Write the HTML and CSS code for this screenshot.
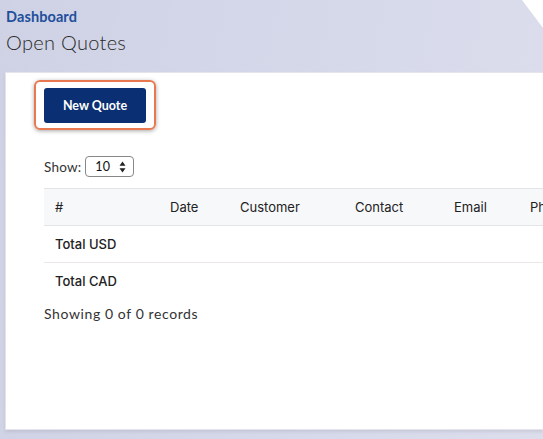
FILE: index.html
```html
<!DOCTYPE html>
<html>
<head>
<meta charset="utf-8">
<link rel="stylesheet" href="styles.css">
</head>
<body>
<div class="page">
  <div class="corner"></div>
  <header class="head">
    <a class="crumb">Dashboard</a>
    <h1 class="title">Open Quotes</h1>
  </header>
  <section class="card">
    <div class="btn-wrap"><button class="btn">New Quote</button></div>
    <div class="show">
      <span>Show:</span>
      <div class="select"><span>10</span>
        <svg width="7" height="12" viewBox="0 0 7 12"><path d="M3.5 0.5L6.5 4.8H0.5Z M3.5 11.5L6.5 7.2H0.5Z" fill="#222"/></svg>
      </div>
    </div>
    <div class="table">
      <div class="row thead">
        <div class="c c1">#</div>
        <div class="c c2">Date</div>
        <div class="c c3">Customer</div>
        <div class="c c4">Contact</div>
        <div class="c c5">Email</div>
        <div class="c c6">Phone</div>
      </div>
      <div class="row total"><div class="c c1">Total USD</div></div>
      <div class="row total last"><div class="c c1">Total CAD</div></div>
    </div>
    <p class="info">Showing 0 of 0 records</p>
  </section>
</div>
</body>
</html>
```
FILE: styles.css
```css
html, body { margin: 0; padding: 0; }
body {
  width: 543px; height: 439px; overflow: hidden;
  background: linear-gradient(100deg, #cfd2e4 0%, #d6d9ea 60%, #dcdeec 100%);
  font-family: "Lato", "Inter", sans-serif;
  color: #222;
}
.page { position: relative; height: 439px; display: flex; flex-direction: column; }
.corner {
  position: absolute; right: 0; top: 0; width: 21px; height: 28px;
  background: #fff;
  clip-path: polygon(0 0, 100% 0, 100% 100%);
}
.head { padding: 9px 0 0 6px; height: 63px; box-sizing: border-box; }
.crumb { display: block; color: #1f4f9c; font-weight: 700; font-size: 14.5px; line-height: 16px; letter-spacing: 0.1px; }
.title { margin: 5px 0 0; font-weight: 300; font-size: 20px; line-height: 24px; color: #2a2a2a; letter-spacing: 0.3px; }
.card {
  margin: 9px 0 0 5px; flex: none; height: 358px;
  background: #fff;
  border: 1px solid #e4e5ec; border-right: none;
  box-shadow: 0 2px 3px rgba(120,120,140,0.18);
  padding: 7px 0 0 38px; box-sizing: border-box;
}
.btn-wrap {
  width: 122px; height: 50px; box-sizing: border-box;
  border: 2px solid #e8784f; border-radius: 6px;
  display: flex; align-items: center; justify-content: center;
  margin-left: -10px;
  box-shadow: 0 1px 4px rgba(0,0,0,0.35);
}
.btn {
  width: 102px; height: 35px; border: none; border-radius: 3px;
  background: #0a2f72; color: #fff;
  font-family: "Lato", sans-serif; font-weight: 700; font-size: 12.5px;
}
.show { display: flex; align-items: center; gap: 4px; margin-top: 26px; font-size: 13.5px; letter-spacing: 0.2px; color: #333; }
.select {
  width: 49px; height: 21px; box-sizing: border-box; border: 1px solid #888; border-radius: 4px;
  display: flex; align-items: center; justify-content: space-between; padding: 0 7px 0 9px;
  font-size: 12.5px; color: #111;
}
.table { margin-top: 11px; font-family: "Inter", sans-serif; font-size: 13px; color: #222; }
.row { display: flex; align-items: center; border-top: 1px solid #e3e4e8; }
.thead { height: 36px; background: #f7f8fa; border-bottom: 1px solid #e3e4e8; }
.total { height: 36px; border-top: none; border-bottom: 1px solid #ece8e8; }
.total .c1 { font-weight: 500; width: auto; }
.last { border-bottom: none; }
.c { flex: none; white-space: nowrap; }
.c1 { width: 126px; padding-left: 11px; box-sizing: border-box; }
.c2 { width: 70px; }
.c3 { width: 115px; }
.c4 { width: 99px; }
.c5 { width: 76px; }
.info { margin: 6px 0 0; font-size: 14px; letter-spacing: 0.6px; color: #333; }
```
